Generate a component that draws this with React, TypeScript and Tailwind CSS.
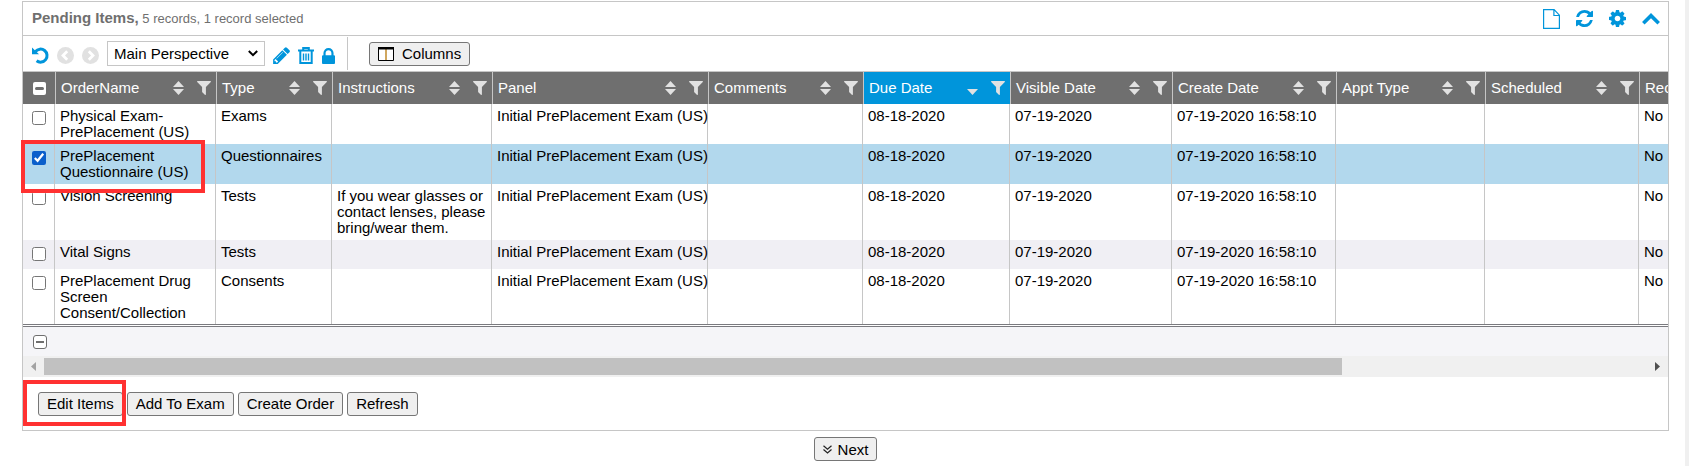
import type { ReactNode } from "react";

const FILTER =
  "M1595 295q17 41-14 70l-493 493v742q0 42-39 59-13 5-25 5-27 0-45-19l-256-256q-19-19-19-45v-486l-493-493q-31-29-14-70 17-39 59-39h1280q42 0 59 39z";
const LOCK =
  "M640 768h512v-192q0-106-75-181t-181-75-181 75-75 181v192zm832 96v576q0 40-28 68t-68 28h-960q-40 0-68-28t-28-68v-576q0-40 28-68t68-28h32v-192q0-184 132-316t316-132 316 132 132 316v192h32q40 0 68 28t28 68z";
const REFRESH =
  "M1639 1056q0 5-1 7-64 268-268 434.5t-478 166.5q-146 0-282.5-55t-243.5-157l-129 129q-19 19-45 19t-45-19-19-45v-448q0-26 19-45t45-19h448q26 0 45 19t19 45-19 45l-137 137q71 66 161 102t187 36q134 0 250-65t186-179q11-17 53-117 8-23 30-23h192q13 0 22.5 9.5t9.5 22.5zm25-800v448q0 26-19 45t-45 19h-448q-26 0-45-19t-19-45 19-45l138-138q-148-137-349-137-134 0-250 65t-186 179q-11 17-53 117-8 23-30 23h-199q-13 0-22.5-9.5t-9.5-22.5v-7q65-268 270-434.5t480-166.5q146 0 284 55.5t245 156.5l130-129q19-19 45-19t45 19 19 45z";
const COG =
  "M1152 896q0-106-75-181t-181-75-181 75-75 181 75 181 181 75 181-75 75-181zm512-109v222q0 12-8 23t-20 13l-185 28q-19 54-39 91 35 50 107 138 10 12 10 25t-9 23q-27 37-99 108t-94 71q-12 0-26-9l-138-108q-44 23-91 38-16 136-29 186-7 28-36 28h-222q-14 0-24.5-8.5t-11.5-21.5l-28-184q-49-16-90-37l-141 107q-10 9-25 9-14 0-25-11-126-114-165-168-7-10-7-23 0-12 8-23 15-21 51-66.5t54-70.5q-27-50-41-99l-183-27q-13-2-21-12.5t-8-23.5v-222q0-12 8-23t19-13l186-28q14-46 39-92-40-57-107-138-10-12-10-24 0-10 9-23 26-36 98.5-107.5t94.5-71.5q13 0 26 10l138 107q44-23 91-38 16-136 29-186 7-28 36-28h222q14 0 24.5 8.5t11.5 21.5l28 184q49 16 90 37l142-107q9-9 24-9 13 0 25 10 129 119 165 170 7 8 7 22 0 12-8 23-15 21-51 66.5t-54 70.5q26 50 41 98l183 28q13 2 21 12.5t8 23.5z";
const PENCIL =
  "M491 1536l91-91-235-235-91 91v107h128v128h107zm523-928q0-22-22-22-10 0-17 7l-542 542q-7 7-7 17 0 22 22 22 10 0 17-7l542-542q7-7 7-17zm-54-192l416 416-832 832h-416v-416zm683 96q0 53-37 90l-166 166-416-416 166-165q36-38 90-38 53 0 91 38l235 234q37 39 37 91z";

function Glyph({ d, className, viewBox = "128 128 1536 1536" }: { d: string; className: string; viewBox?: string }) {
  return (
    <svg viewBox={viewBox} fill="currentColor" className={className} aria-hidden="true">
      <path d={d} />
    </svg>
  );
}

function IconButton({ label, children, className = "" }: { label: string; children: ReactNode; className?: string }) {
  return (
    <button type="button" aria-label={label} className={`flex items-center justify-center ${className}`}>
      {children}
    </button>
  );
}

function PushButton({ children }: { children: ReactNode }) {
  return (
    <button
      type="button"
      className="flex h-6 items-center rounded-[3px] border border-[#767676] bg-[#efefef] px-2 text-[15px] leading-none text-black"
    >
      {children}
    </button>
  );
}

function CircleChevron({ flip = false }: { flip?: boolean }) {
  return (
    <svg viewBox="0 0 17 17" className={flip ? "size-[17px] -scale-x-100" : "size-[17px]"} aria-hidden="true">
      <circle cx="8.5" cy="8.5" r="8.5" fill="#e1e1e1" />
      <path d="M10.2 4.2 6 8.500l4.200 4.300" fill="none" stroke="#fff" strokeWidth="2.8" />
    </svg>
  );
}

type Sort = "none" | "desc";

const columns: { name: string; width: string; sort: Sort }[] = [
  { name: "OrderName", width: "w-[161px]", sort: "none" },
  { name: "Type", width: "w-[116px]", sort: "none" },
  { name: "Instructions", width: "w-[160px]", sort: "none" },
  { name: "Panel", width: "w-[216px]", sort: "none" },
  { name: "Comments", width: "w-[155px]", sort: "none" },
  { name: "Due Date", width: "w-[147px]", sort: "desc" },
  { name: "Visible Date", width: "w-[162px]", sort: "none" },
  { name: "Create Date", width: "w-[164px]", sort: "none" },
  { name: "Appt Type", width: "w-[149px]", sort: "none" },
  { name: "Scheduled", width: "w-[154px]", sort: "none" },
  { name: "Recurring", width: "w-[160px]", sort: "none" },
];

const panel = "Initial PrePlacement Exam (US)";

const rows = [
  { order: "Physical Exam-PrePlacement (US)", type: "Exams", note: "", height: "h-10", tone: "bg-white", selected: false },
  { order: "PrePlacement Questionnaire (US)", type: "Questionnaires", note: "", height: "h-10", tone: "bg-[#b2d8ed]", selected: true },
  { order: "Vision Screening", type: "Tests", note: "If you wear glasses or contact lenses, please bring/wear them.", height: "h-14", tone: "bg-white", selected: false },
  { order: "Vital Signs", type: "Tests", note: "", height: "h-[29px]", tone: "bg-[#f0eff4]", selected: false },
  { order: "PrePlacement Drug Screen Consent/Collection", type: "Consents", note: "", height: "h-[55px]", tone: "bg-white", selected: false },
];

function SortMark({ sort }: { sort: Sort }) {
  return (
    <svg viewBox="0 0 11 14" className="h-[14px] w-[11px]" fill="currentColor" aria-hidden="true">
      {sort === "none" && <path d="M5.500 0 11 6H0Z" />}
      <path d="M5.500 14 0 8h11Z" />
    </svg>
  );
}

export default function App() {
  return (
    <div className="flex min-h-screen bg-white font-['Liberation_Sans',Arial,sans-serif] text-[15px] text-black">
      <main className="flex min-w-0 flex-1 flex-col pl-[22px] pr-4 pt-px">
        <section className="relative border border-[#c6c6c6]">
          <header className="flex h-[34px] items-center justify-between border-b border-[#c6c6c6] pl-[9px] pr-2">
            <h1 className="text-[13px] text-[#6f6f6f]">
              <span className="text-[15px] font-bold">Pending Items,</span> 5 records, 1 record selected
            </h1>
            <div className="flex items-center gap-4 text-[#0095db]">
              <IconButton label="New">
                <svg viewBox="0 0 17 20" className="h-5 w-[17px]" fill="none" stroke="currentColor" aria-hidden="true">
                  <path d="M.6.600h10.500l5.300 5.600v13.200H.6ZM10.900.700v5.800h5.500" strokeWidth="1.200" />
                </svg>
              </IconButton>
              <IconButton label="Refresh records">
                <Glyph d={REFRESH} className="size-[17px]" />
              </IconButton>
              <IconButton label="Settings">
                <Glyph d={COG} className="size-[17px]" />
              </IconButton>
              <IconButton label="Collapse">
                <svg viewBox="0 0 18 12" className="h-3 w-[18px]" fill="none" stroke="currentColor" aria-hidden="true">
                  <path d="M1.300 10.200 9 2.600l7.700 7.600" strokeWidth="3.600" />
                </svg>
              </IconButton>
            </div>
          </header>

          <div className="flex h-[35px] items-center pl-[9px] text-[#0095db]">
            <div className="flex items-center gap-2">
              <IconButton label="Undo" className="pt-1">
                <svg viewBox="0 0 17 17" className="size-[17px]" fill="none" stroke="currentColor" aria-hidden="true">
                  <path d="M3.500 4.500A6.500 6.500 0 1 1 4.600 13.800" strokeWidth="3" />
                  <path d="M0 .5v6.800h7Z" fill="currentColor" stroke="none" />
                </svg>
              </IconButton>
              <IconButton label="Previous" className="pt-1">
                <CircleChevron />
              </IconButton>
              <IconButton label="Next perspective" className="pt-1">
                <CircleChevron flip />
              </IconButton>
              <div className="relative flex items-center text-black">
                <select
                  aria-label="Perspective"
                  className="h-[25px] w-[158px] appearance-none border border-[#c6c6c6] bg-white pl-1.5 text-[15px] leading-none"
                >
                  <option>Main Perspective</option>
                </select>
                <svg viewBox="0 0 10 7" className="pointer-events-none absolute right-[7px] h-[7px] w-[10px]" fill="none" stroke="currentColor" aria-hidden="true">
                  <path d="m.8 1 4.200 4.200L9.200 1" strokeWidth="2" />
                </svg>
              </div>
              <IconButton label="Edit perspective" className="pt-1">
                <Glyph d={PENCIL} viewBox="128 128 1515 1536" className="size-[17px]" />
              </IconButton>
              <IconButton label="Delete perspective" className="pt-1">
                <svg viewBox="0 0 16 17" className="h-[17px] w-4" fill="none" stroke="currentColor" aria-hidden="true">
                  <path d="M0 3.500h16M5.200 3V1h5.600v2M2.300 4v12h11.400V4" strokeWidth="2" />
                  <path d="M5.500 6.500v7M8 6.500v7M10.500 6.500v7" strokeWidth="1.400" />
                </svg>
              </IconButton>
              <IconButton label="Lock perspective" className="pt-1">
                <Glyph d={LOCK} viewBox="320 128 1152 1408" className="h-4 w-[13px]" />
              </IconButton>
            </div>
            <div className="ml-3 h-[33px] w-px bg-[#c6c6c6]" />
            <div className="ml-[21px]">
              <PushButton>
                <svg viewBox="0 0 16 14" className="mr-2 h-[14px] w-4" aria-hidden="true">
                  <path d="M.5 1v12.500h15V1" fill="#fff" stroke="#000" />
                  <path d="M8 2v11" stroke="#c08a2a" strokeWidth="1.500" />
                  <path d="M0 0h16v2.500H0Z" />
                </svg>
                Columns
              </PushButton>
            </div>
          </div>

          <div className="overflow-hidden border-t border-[#c6c6c6]">
            <table className="w-[1776px] table-fixed border-separate border-spacing-0 text-left leading-4">
              <thead>
                <tr className="h-8 bg-[#6f6f6f] text-white">
                  <th className="w-8 p-0">
                    <IconButton label="Toggle all records" className="mx-auto size-[13px] rounded-[2px] bg-white">
                      <span className="h-[3px] w-[9px] rounded-sm bg-[#6f6f6f]" />
                    </IconButton>
                  </th>
                  {columns.map((c) => (
                    <th
                      key={c.name}
                      className={`${c.width} border-l border-[#c6c6c6] p-0 font-normal ${c.sort === "desc" ? "bg-[#0095db]" : ""}`}
                    >
                      <div className="flex items-center px-[5px]">
                        <span className="flex-1 whitespace-nowrap">{c.name}</span>
                        <IconButton label={`Sort by ${c.name}`} className="mr-[13px] text-[#e1e1e1]">
                          <SortMark sort={c.sort} />
                        </IconButton>
                        <IconButton label={`Filter ${c.name}`} className="text-[#e1e1e1]">
                          <Glyph d={FILTER} viewBox="192 256 1408 1408" className="size-[14px]" />
                        </IconButton>
                      </div>
                    </th>
                  ))}
                </tr>
              </thead>
              <tbody>
                {rows.map((r) => (
                  <tr key={r.order} className={`${r.height} ${r.tone} align-top`}>
                    <td className="border-r border-[#c6c6c6] p-0 pt-[7px]">
                      <input
                        type="checkbox"
                        aria-label={`Select ${r.order}`}
                        defaultChecked={r.selected}
                        className="mx-auto block size-[14px] accent-[#0a5fcb]"
                      />
                    </td>
                    {[r.order, r.type, r.note, panel, "", "08-18-2020", "07-19-2020", "07-19-2020 16:58:10", "", "", "No"].map((text, i) => (
                      <td key={i} className={`border-r border-[#c6c6c6] pb-0 pl-[5px] pt-1 ${i > 2 ? "whitespace-nowrap pr-0" : "pr-[5px]"}`}>
                        {text}
                      </td>
                    ))}
                  </tr>
                ))}
              </tbody>
            </table>
          </div>

          <div className="flex h-8 flex-col border-t border-[#7a7a7f] bg-white pt-px">
            <div className="flex flex-1 items-center border-t border-[#7a7a7f] bg-[#f5f5f8] pl-[10px]">
              <IconButton label="Toggle footer" className="size-[14px] rounded-[3px] border border-[#6f6f6f] bg-white">
                <span className="h-0.5 w-2 bg-[#6f6f6f]" />
              </IconButton>
            </div>
          </div>

          <div className="flex h-[21px] items-center bg-[#f0f0f0]">
            <IconButton label="Scroll left" className="w-[21px]">
              <svg viewBox="0 0 5 9" className="h-[9px] w-[5px]" fill="#a3a3a3" aria-hidden="true">
                <path d="M5 0v9L0 4.500Z" />
              </svg>
            </IconButton>
            <div className="flex-1">
              <div className="h-[17px] w-[81%] bg-[#c1c1c1]" />
            </div>
            <IconButton label="Scroll right" className="w-[21px]">
              <svg viewBox="0 0 5 9" className="h-[9px] w-[5px]" fill="#505050" aria-hidden="true">
                <path d="M0 0v9l5-4.500Z" />
              </svg>
            </IconButton>
          </div>

          <div className="flex h-[53px] items-center gap-1 pl-[15px]">
            <PushButton>Edit Items</PushButton>
            <PushButton>Add To Exam</PushButton>
            <PushButton>Create Order</PushButton>
            <PushButton>Refresh</PushButton>
          </div>

          <div className="pointer-events-none absolute -left-0.5 top-[138px] h-[53px] w-[184px] border-4 border-[#ff3131]" />
          <div className="pointer-events-none absolute bottom-1 left-0 h-[46px] w-[103px] border-4 border-[#ff3131]" />
        </section>

        <div className="flex justify-center pt-1.5">
          <PushButton>
            <svg viewBox="0 0 9 9" className="mr-1.5 size-[9px]" fill="none" stroke="#222" aria-hidden="true">
              <path d="m.5.700 4 3.500 4-3.500M.5 4.500l4 3.500 4-3.500" strokeWidth="1.200" />
            </svg>
            Next
          </PushButton>
        </div>
      </main>
      <div className="w-1 bg-[#f0f0f0]" />
    </div>
  );
}
